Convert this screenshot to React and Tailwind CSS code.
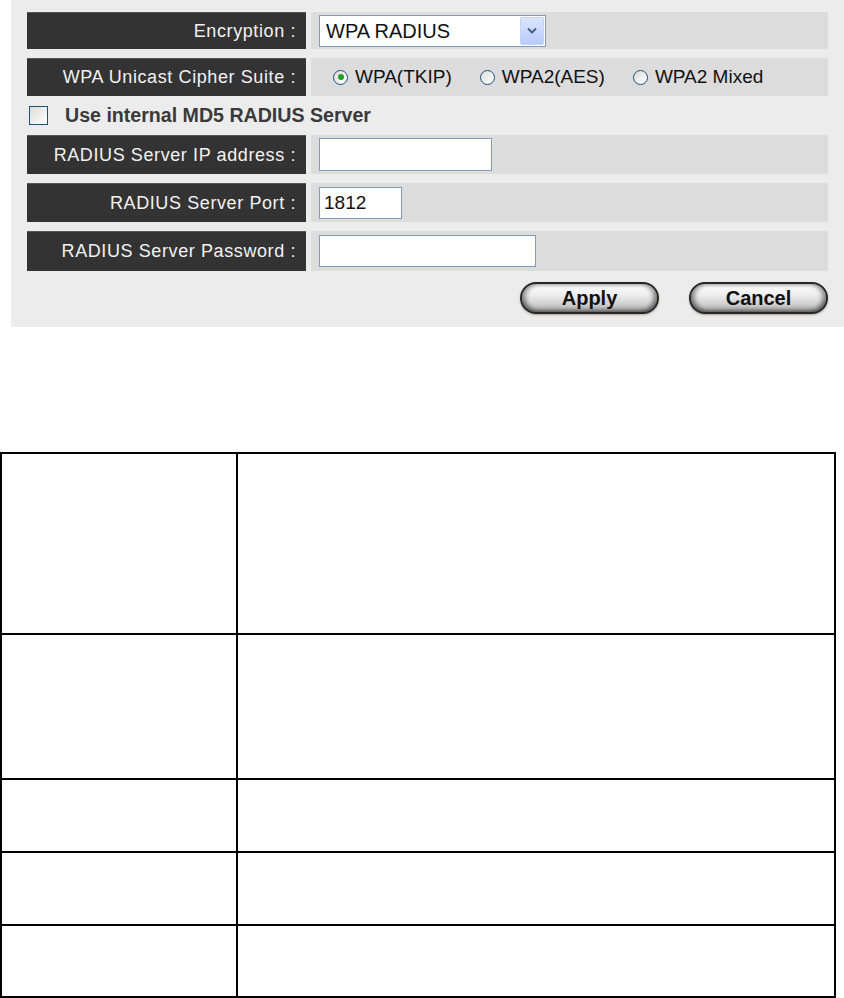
import React, { useState } from 'react';

const labelCls =
  'w-[279px] shrink-0 bg-[#333333] text-[#f2f2f2] text-[18px] tracking-[0.6px] flex items-center justify-end pr-[10px] border-t border-[#555]';

const Radio = ({ checked, label, onClick }) => (
  <button type="button" onClick={onClick} className="flex items-center gap-[7px]">
    <span className="w-[15px] h-[15px] shrink-0 box-border rounded-full border border-[#1c5180] bg-[linear-gradient(135deg,#dcdcd6,#ffffff)] flex items-center justify-center">
      {checked && <span className="w-[6px] h-[6px] rounded-full bg-[#21a121]" />}
    </span>
    <span className="text-[19px] text-[#111]">{label}</span>
  </button>
);

const PillButton = ({ children }) => (
  <button
    type="button"
    className="w-[139px] h-[32px] rounded-full border-2 border-[#262626] bg-[linear-gradient(180deg,#ffffff_0%,#ededed_40%,#b5b5b5_100%)] shadow-[inset_4px_0_4px_rgba(0,0,0,0.35),inset_-4px_0_4px_rgba(0,0,0,0.35),inset_0_-3px_4px_rgba(0,0,0,0.25),0_1px_2px_rgba(120,90,60,0.5)] text-[20px] font-bold text-[#111] flex items-center justify-center"
  >
    {children}
  </button>
);

const App = () => {
  const [cipher, setCipher] = useState('tkip');
  const [useMd5, setUseMd5] = useState(false);

  return (
    <div className="w-[844px] h-[998px] bg-white font-['Liberation_Sans',Arial,sans-serif]">
      {/* settings panel */}
      <div className="ml-[11px] bg-[#ececec] pt-[12px] pb-[13px] pl-[16px] pr-[16px]">
        <div className="flex gap-[5px] h-[37px]">
          <div className={labelCls}>Encryption :</div>
          <div className="flex-1 bg-[#dcdcdc] flex items-center pl-[8px]">
            <div className="w-[227px] h-[32px] bg-white border border-[#7f9db9] flex items-center justify-between pl-[6px] pr-[1px]">
              <span className="text-[20px] text-[#111]">WPA RADIUS</span>
              <span className="w-[24px] h-[28px] rounded-[2px] bg-[linear-gradient(180deg,#dbe6fd,#b7cbf7)] border border-[#c3d3fd] flex items-center justify-center">
                <svg width="10" height="7" viewBox="0 0 10 7">
                  <path d="M1 1.5 L5 5.5 L9 1.5" fill="none" stroke="#4d6185" strokeWidth="2" />
                </svg>
              </span>
            </div>
          </div>
        </div>

        <div className="flex gap-[5px] h-[38px] mt-[9px]">
          <div className={labelCls}>WPA Unicast Cipher Suite :</div>
          <div className="flex-1 bg-[#dcdcdc] flex items-center pl-[22px] gap-[28px]">
            <Radio checked={cipher === 'tkip'} label="WPA(TKIP)" onClick={() => setCipher('tkip')} />
            <Radio checked={cipher === 'aes'} label="WPA2(AES)" onClick={() => setCipher('aes')} />
            <Radio checked={cipher === 'mixed'} label="WPA2 Mixed" onClick={() => setCipher('mixed')} />
          </div>
        </div>

        <div className="h-[39px] flex items-center pl-[2px]">
          <button
            type="button"
            onClick={() => setUseMd5(!useMd5)}
            className="w-[19px] h-[19px] shrink-0 border border-[#1c5180] bg-[linear-gradient(135deg,#dcdcd6,#ffffff)] flex items-center justify-center text-[12px]"
          >
            {useMd5 ? '✓' : ''}
          </button>
          <span className="ml-[17px] text-[19.6px] font-bold text-[#3a3a3a]">Use internal MD5 RADIUS Server</span>
        </div>

        <div className="flex gap-[5px] h-[39px]">
          <div className={labelCls}>RADIUS Server IP address :</div>
          <div className="flex-1 bg-[#dcdcdc] flex items-center pl-[8px]">
            <input className="w-[173px] h-[33px] bg-white border border-[#7f9db9] outline-none px-[4px] text-[19px]" />
          </div>
        </div>

        <div className="flex gap-[5px] h-[39px] mt-[9px]">
          <div className={labelCls}>RADIUS Server Port :</div>
          <div className="flex-1 bg-[#dcdcdc] flex items-center pl-[8px]">
            <input
              defaultValue="1812"
              className="w-[83px] h-[32px] bg-white border border-[#7f9db9] outline-none px-[4px] text-[19px] text-[#111]"
            />
          </div>
        </div>

        <div className="flex gap-[5px] h-[40px] mt-[9px]">
          <div className={labelCls}>RADIUS Server Password :</div>
          <div className="flex-1 bg-[#dcdcdc] flex items-center pl-[8px]">
            <input
              type="password"
              className="w-[217px] h-[32px] bg-white border border-[#7f9db9] outline-none px-[4px] text-[19px]"
            />
          </div>
        </div>

        <div className="flex justify-end gap-[30px] mt-[11px]">
          <PillButton>Apply</PillButton>
          <PillButton>Cancel</PillButton>
        </div>
      </div>

      {/* description table (empty cells) */}
      <div className="mt-[125px] w-[836px] border-2 border-black">
        {[179, 143, 71, 71, 70].map((h, i) => (
          <div key={i} className={`flex ${i > 0 ? 'border-t-2 border-black' : ''}`} style={{ height: h + (i > 0 ? 2 : 0) }}>
            <div className="w-[236px] border-r-2 border-black" />
            <div className="flex-1" />
          </div>
        ))}
      </div>
    </div>
  );
};

export default App;
